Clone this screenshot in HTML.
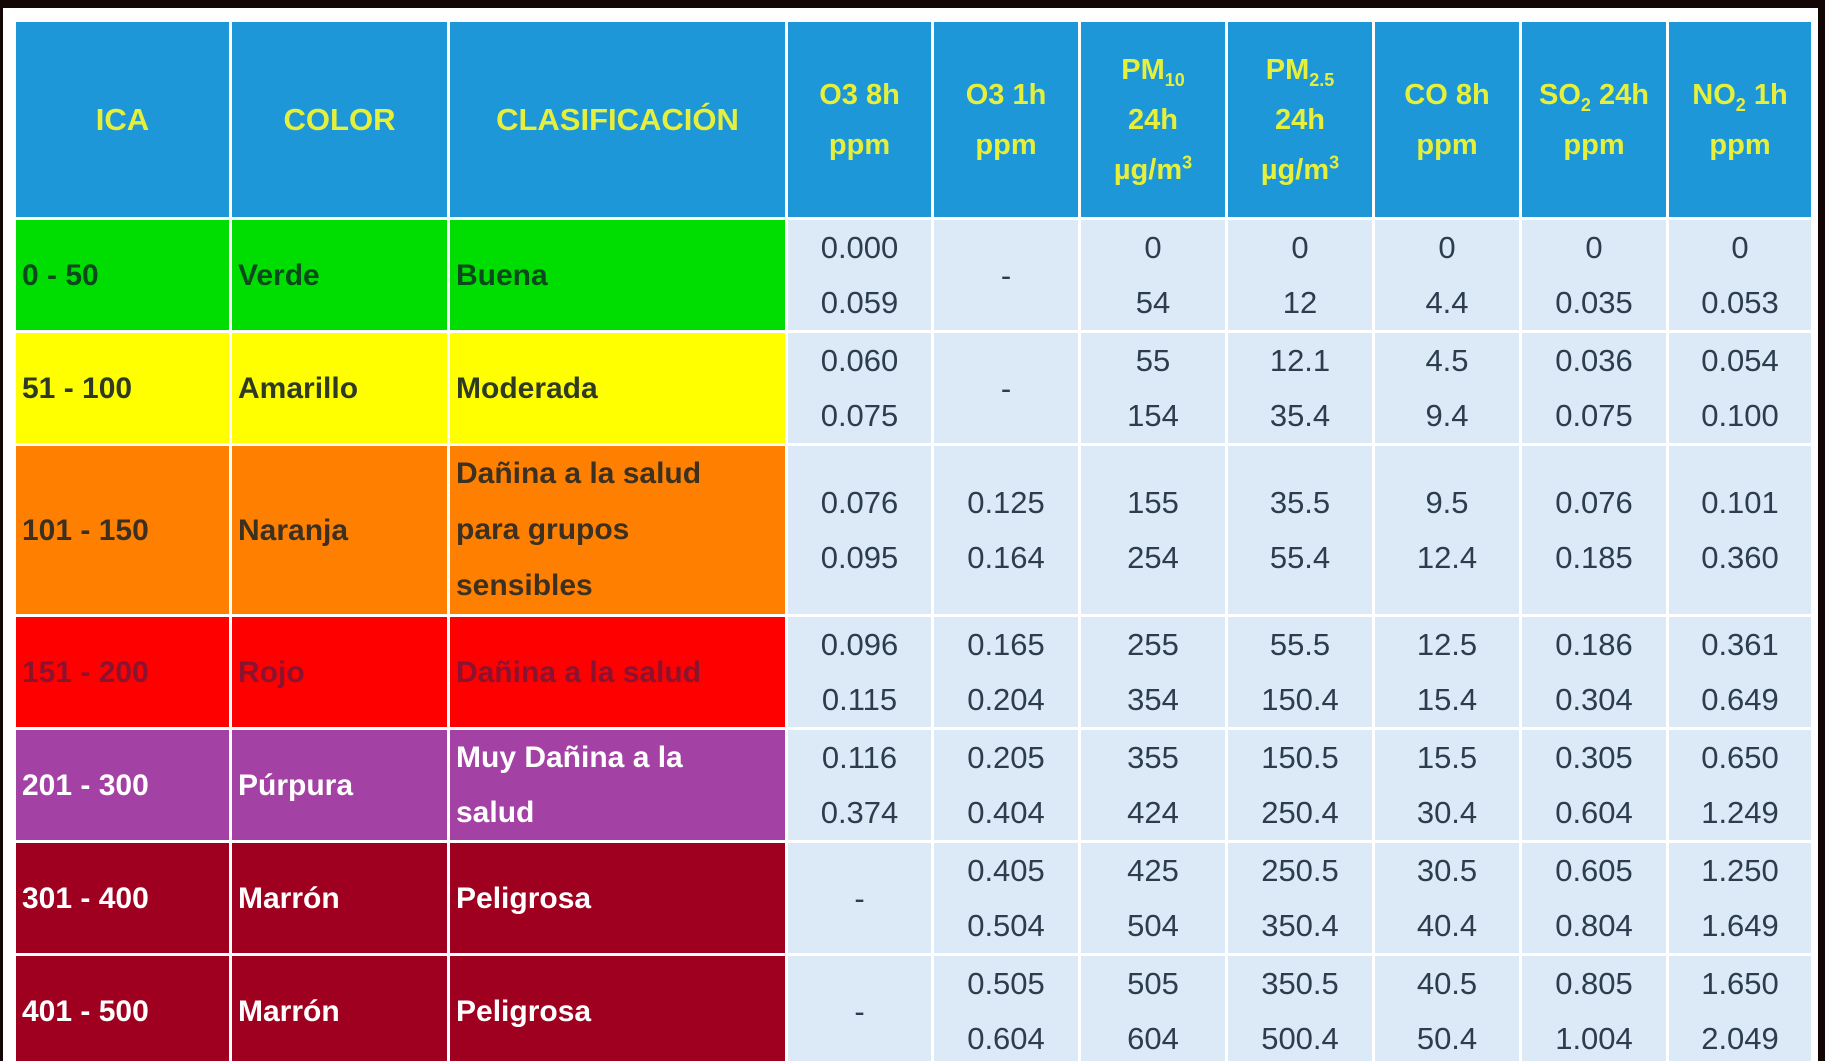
<!DOCTYPE html>
<html><head><meta charset="utf-8"><style>
html,body{margin:0;padding:0;background:#140604;width:1825px;height:1061px;overflow:hidden}
.wrap{position:absolute;left:0;top:0;width:1825px;height:1061px;overflow:hidden}
.frame{position:absolute;left:3px;top:8px;width:1815px;height:1053px;background:#fff}
table{position:absolute;left:13px;top:19px;border-collapse:collapse;table-layout:fixed;font-family:"Liberation Sans",sans-serif}
td{border:3px solid #fff;padding:0;overflow:hidden}
th{border:3px solid #fff;background:#1e97d8;color:#e6f03a;font-weight:bold;font-size:29px;line-height:50px;text-align:center;padding:0}
th.l{font-size:31px}
.n{background:#dce9f6;color:#2d3d4e;font-size:31px;text-align:center;line-height:55px}
.c{font-weight:bold;font-size:30px;padding-left:6px;line-height:55px}
.o3{line-height:56px}
.g{background:#00dd00;color:#0b4a1c}
.y{background:#ffff00;color:#2e3a22}
.o{background:#ff8000;color:#3c3020}
.r{background:#ff0000;color:#8a1430}
.p{background:#a441a4;color:#fff}
.m{background:#a00020;color:#fff}
sub,sup{font-size:18px;line-height:0}
</style></head><body>
<div class="wrap">
<div class="frame"></div>
<table>
<colgroup><col style="width:216px"><col style="width:218px"><col style="width:338px"><col style="width:146px"><col style="width:147px"><col style="width:147px"><col style="width:147px"><col style="width:147px"><col style="width:147px"><col style="width:145px"></colgroup>
<tr style="height:198px"><th class="l">ICA</th><th class="l">COLOR</th><th class="l">CLASIFICACIÓN</th><th>O3 8h<br>ppm</th><th>O3 1h<br>ppm</th><th>PM<sub>10</sub><br>24h<br>µg/m<sup>3</sup></th><th>PM<sub>2.5</sub><br>24h<br>µg/m<sup>3</sup></th><th>CO 8h<br>ppm</th><th>SO<sub>2</sub> 24h<br>ppm</th><th>NO<sub>2</sub> 1h<br>ppm</th></tr>
<tr style="height:112px"><td class="c g">0 - 50</td><td class="c g">Verde</td><td class="c g">Buena</td><td class="n">0.000<br>0.059</td><td class="n">-</td><td class="n">0<br>54</td><td class="n">0<br>12</td><td class="n">0<br>4.4</td><td class="n">0<br>0.035</td><td class="n">0<br>0.053</td></tr>
<tr style="height:110px"><td class="c y">51 - 100</td><td class="c y">Amarillo</td><td class="c y">Moderada</td><td class="n">0.060<br>0.075</td><td class="n">-</td><td class="n">55<br>154</td><td class="n">12.1<br>35.4</td><td class="n">4.5<br>9.4</td><td class="n">0.036<br>0.075</td><td class="n">0.054<br>0.100</td></tr>
<tr style="height:168px"><td class="c o">101 - 150</td><td class="c o">Naranja</td><td class="c o o3">Dañina a la salud<br>para grupos<br>sensibles</td><td class="n">0.076<br>0.095</td><td class="n">0.125<br>0.164</td><td class="n">155<br>254</td><td class="n">35.5<br>55.4</td><td class="n">9.5<br>12.4</td><td class="n">0.076<br>0.185</td><td class="n">0.101<br>0.360</td></tr>
<tr style="height:110px"><td class="c r">151 - 200</td><td class="c r">Rojo</td><td class="c r">Dañina a la salud</td><td class="n">0.096<br>0.115</td><td class="n">0.165<br>0.204</td><td class="n">255<br>354</td><td class="n">55.5<br>150.4</td><td class="n">12.5<br>15.4</td><td class="n">0.186<br>0.304</td><td class="n">0.361<br>0.649</td></tr>
<tr style="height:110px"><td class="c p">201 - 300</td><td class="c p">Púrpura</td><td class="c p">Muy Dañina a la<br>salud</td><td class="n">0.116<br>0.374</td><td class="n">0.205<br>0.404</td><td class="n">355<br>424</td><td class="n">150.5<br>250.4</td><td class="n">15.5<br>30.4</td><td class="n">0.305<br>0.604</td><td class="n">0.650<br>1.249</td></tr>
<tr style="height:111px"><td class="c m">301 - 400</td><td class="c m">Marrón</td><td class="c m">Peligrosa</td><td class="n">-</td><td class="n">0.405<br>0.504</td><td class="n">425<br>504</td><td class="n">250.5<br>350.4</td><td class="n">30.5<br>40.4</td><td class="n">0.605<br>0.804</td><td class="n">1.250<br>1.649</td></tr>
<tr style="height:112px"><td class="c m">401 - 500</td><td class="c m">Marrón</td><td class="c m">Peligrosa</td><td class="n">-</td><td class="n">0.505<br>0.604</td><td class="n">505<br>604</td><td class="n">350.5<br>500.4</td><td class="n">40.5<br>50.4</td><td class="n">0.805<br>1.004</td><td class="n">1.650<br>2.049</td></tr>
</table>
</div>
</body></html>
